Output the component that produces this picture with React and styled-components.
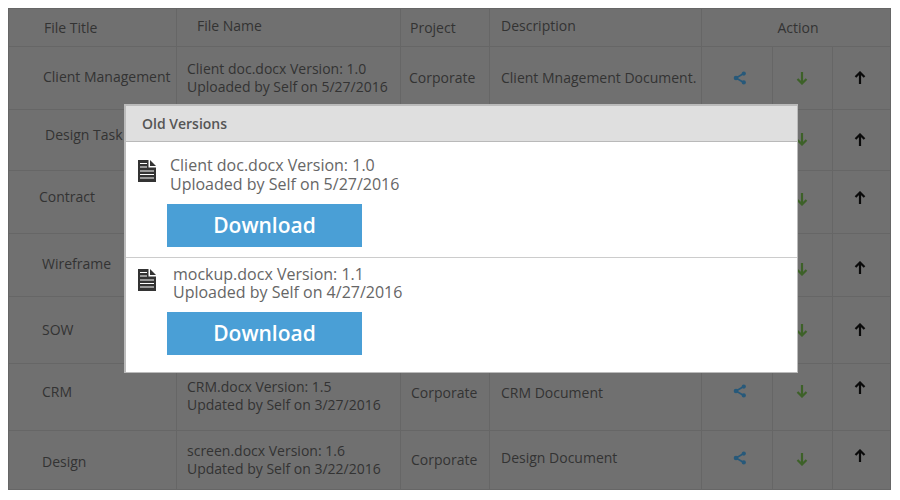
import React from 'react';
import styled, { createGlobalStyle } from 'styled-components';

const GlobalStyle = createGlobalStyle`
  html, body {
    margin: 0;
    padding: 0;
    background: #fff;
    font-family: "Open Sans", "Liberation Sans", sans-serif;
  }
`;

const Page = styled.div`
  position: relative;
  width: 900px;
  height: 500px;
  padding: 8px 0 0 8px;
  box-sizing: border-box;
  overflow: hidden;
`;

const Table = styled.table`
  width: 882px;
  table-layout: fixed;
  border-collapse: collapse;
  background: #707070;
  border: 1px solid #b4b4b4;
  color: #333;
  font-size: 14px;
  line-height: 18px;
`;

const HeadRow = styled.tr`
  height: 38px;
`;

const Row = styled.tr`
  height: ${({ $h }) => $h}px;
`;

const Cell = styled.td`
  box-sizing: border-box;
  border: 1px solid #666;
  padding: ${({ $dy = 0 }) => (Math.max($dy, 0) * 2)}px ${({ $pr = 0 }) => $pr}px ${({ $dy = 0 }) => (Math.max(-$dy, 0) * 2)}px ${({ $pl = 0 }) => $pl}px;
  white-space: nowrap;
  overflow: hidden;
  vertical-align: middle;
  font-weight: 400;
  text-align: ${({ $center }) => ($center ? 'center' : 'left')};
`;

const Modal = styled.div`
  position: absolute;
  left: 124px;
  top: 104px;
  width: 674px;
  box-sizing: border-box;
  background: #fff;
  border: 1px solid #bbb;
  border-width: 2px 1px 1px 2px;
`;

const ModalHeader = styled.div`
  height: 36px;
  background: #dfdfdf;
  border-bottom: 1px solid #b9b9b9;
  padding-left: 16px;
  box-sizing: border-box;
  font-size: 14px;
  font-weight: 600;
  line-height: 35px;
  color: #555;
`;

const Version = styled.div`
  height: ${({ $h }) => $h}px;
  box-sizing: border-box;
  padding: ${({ $top }) => $top}px 0 0 12px;
  border-bottom: ${({ $last }) => ($last ? 'none' : '1px solid #ccc')};
`;

const VersionInfo = styled.div`
  display: flex;
  align-items: flex-start;
  gap: ${({ $gap }) => $gap}px;
`;

const DocIcon = styled.svg`
  flex: none;
  width: 18px;
  height: 22px;
  margin-top: ${({ $mt }) => $mt}px;
`;

const VersionText = styled.div`
  font-size: 16px;
  line-height: ${({ $lh }) => $lh}px;
  color: #666;
  white-space: nowrap;
`;

const DownloadButton = styled.button`
  display: block;
  width: 195px;
  height: 43px;
  margin: ${({ $mt }) => $mt}px 0 0 29px;
  padding: 0 0 2px;
  border: none;
  background: #4a9fd6;
  color: #fff;
  font-family: inherit;
  font-size: 21px;
  font-weight: 600;
  cursor: pointer;
`;

const IconBox = styled.svg`
  display: block;
  margin: 0 auto;
`;

const ShareIcon = () => (
  <IconBox width="14" height="14" viewBox="0 0 14 14">
    <path d="M10.8 2.6 3 7l7.8 4.4" fill="none" stroke="#27597a" strokeWidth="1.7" />
    <circle cx="10.8" cy="2.6" r="2.1" fill="#27597a" />
    <circle cx="3" cy="7" r="2.3" fill="#27597a" />
    <circle cx="10.8" cy="11.4" r="2.1" fill="#27597a" />
  </IconBox>
);

const DownIcon = () => (
  <IconBox width="12" height="14" viewBox="0 0 12 14">
    <path d="M6 1v11.5M1.5 8 6 12.5 10.5 8" fill="none" stroke="#3d6128" strokeWidth="2.2" />
  </IconBox>
);

const UpIcon = () => (
  <IconBox width="12" height="14" viewBox="0 0 12 14">
    <path d="M6 13V1.5M1.5 6 6 1.5 10.5 6" fill="none" stroke="#0b0b0b" strokeWidth="2.2" />
  </IconBox>
);

const FileIcon = ({ mt }) => (
  <DocIcon $mt={mt} viewBox="0 0 18 22">
    <path d="M0 0h10.5v7.5H18V22H0z" fill="#333" />
    <path d="M12 0l6 6h-6z" fill="#333" />
    <path d="M2 3.5h7M2 7h7M2 11h14M2 14.5h14M2 18h14" stroke="#fff" strokeWidth="1" />
  </DocIcon>
);

const rows = [
  { h: 63, title: ['Client Management', 34, -1], file: [['Client doc.docx Version: 1.0', 'Uploaded by Self on 5/27/2016'], 10, 0], project: ['Corporate', 8, 0], desc: ['Client Mnagement Document.', 11, 0], icons: [0, 0, 0], share: true },
  { h: 61, title: ['Design Task', 36, -5], icons: [0, -1, 0] },
  { h: 63, title: ['Contract', 30, -5], icons: [0, -3, -4] },
  { h: 63, title: ['Wireframe', 33, -1], icons: [0, 4, 3] },
  { h: 67, title: ['SOW', 33, 0], icons: [0, 0, 0] },
  { h: 67, title: ['CRM', 33, -5], file: [['CRM.docx Version: 1.5', 'Updated by Self on 3/27/2016'], 10, -1], project: ['Corporate', 10, -4], desc: ['CRM Document', 11, -4], icons: [-6, -6, -9], share: true },
  { h: 59, title: ['Design', 33, 2], file: [['screen.docx Version: 1.6', 'Updated by Self on 3/22/2016'], 10, 0], project: ['Corporate', 10, 0], desc: ['Design Document', 11, -2], icons: [-2, -1, -4], share: true },
];

const versions = [
  { name: 'Client doc.docx Version: 1.0', by: 'Uploaded by Self on 5/27/2016', h: 116, top: 14, gap: 14, lh: 19, iconTop: 4, btnTop: 10 },
  { name: 'mockup.docx Version: 1.1', by: 'Uploaded by Self on 4/27/2016', h: 114, top: 7, gap: 17, lh: 18, iconTop: 4, btnTop: 11, last: true },
];

export default function App() {
  return (
    <Page>
      <GlobalStyle />
      <Table>
        <colgroup>
          {[168, 224, 89, 212, 71, 60, 58].map((w, i) => (
            <col key={i} style={{ width: w }} />
          ))}
        </colgroup>
        <thead>
          <HeadRow>
            <Cell as="th" $pl={35}>File Title</Cell>
            <Cell as="th" $pl={20} $dy={-2}>File Name</Cell>
            <Cell as="th" $pl={9}>Project</Cell>
            <Cell as="th" $pl={11} $dy={-2}>Description</Cell>
            <Cell as="th" colSpan={3} $center $pl={4}>Action</Cell>
          </HeadRow>
        </thead>
        <tbody>
          {rows.map((r, i) => (
            <Row key={i} $h={r.h}>
              <Cell $pl={r.title[1]} $dy={r.title[2]}>{r.title[0]}</Cell>
              <Cell $pl={r.file ? r.file[1] : 0} $dy={r.file ? r.file[2] : 0}>
                {r.file && r.file[0].map((line) => <div key={line}>{line}</div>)}
              </Cell>
              <Cell $pl={r.project ? r.project[1] : 0} $dy={r.project ? r.project[2] : 0}>{r.project && r.project[0]}</Cell>
              <Cell $pl={r.desc ? r.desc[1] : 0} $dy={r.desc ? r.desc[2] : 0}>{r.desc && r.desc[0]}</Cell>
              <Cell $center $pl={5} $dy={r.icons[0]}>{r.share && <ShareIcon />}</Cell>
              <Cell $center $pr={1} $dy={r.icons[1]}><DownIcon /></Cell>
              <Cell $center $pr={4} $dy={r.icons[2]}><UpIcon /></Cell>
            </Row>
          ))}
        </tbody>
      </Table>
      <Modal>
        <ModalHeader>Old Versions</ModalHeader>
        {versions.map((v) => (
          <Version key={v.name} $h={v.h} $top={v.top} $last={v.last}>
            <VersionInfo $gap={v.gap}>
              <FileIcon mt={v.iconTop} />
              <VersionText $lh={v.lh}>
                <div>{v.name}</div>
                <div>{v.by}</div>
              </VersionText>
            </VersionInfo>
            <DownloadButton $mt={v.btnTop}>Download</DownloadButton>
          </Version>
        ))}
      </Modal>
    </Page>
  );
}
